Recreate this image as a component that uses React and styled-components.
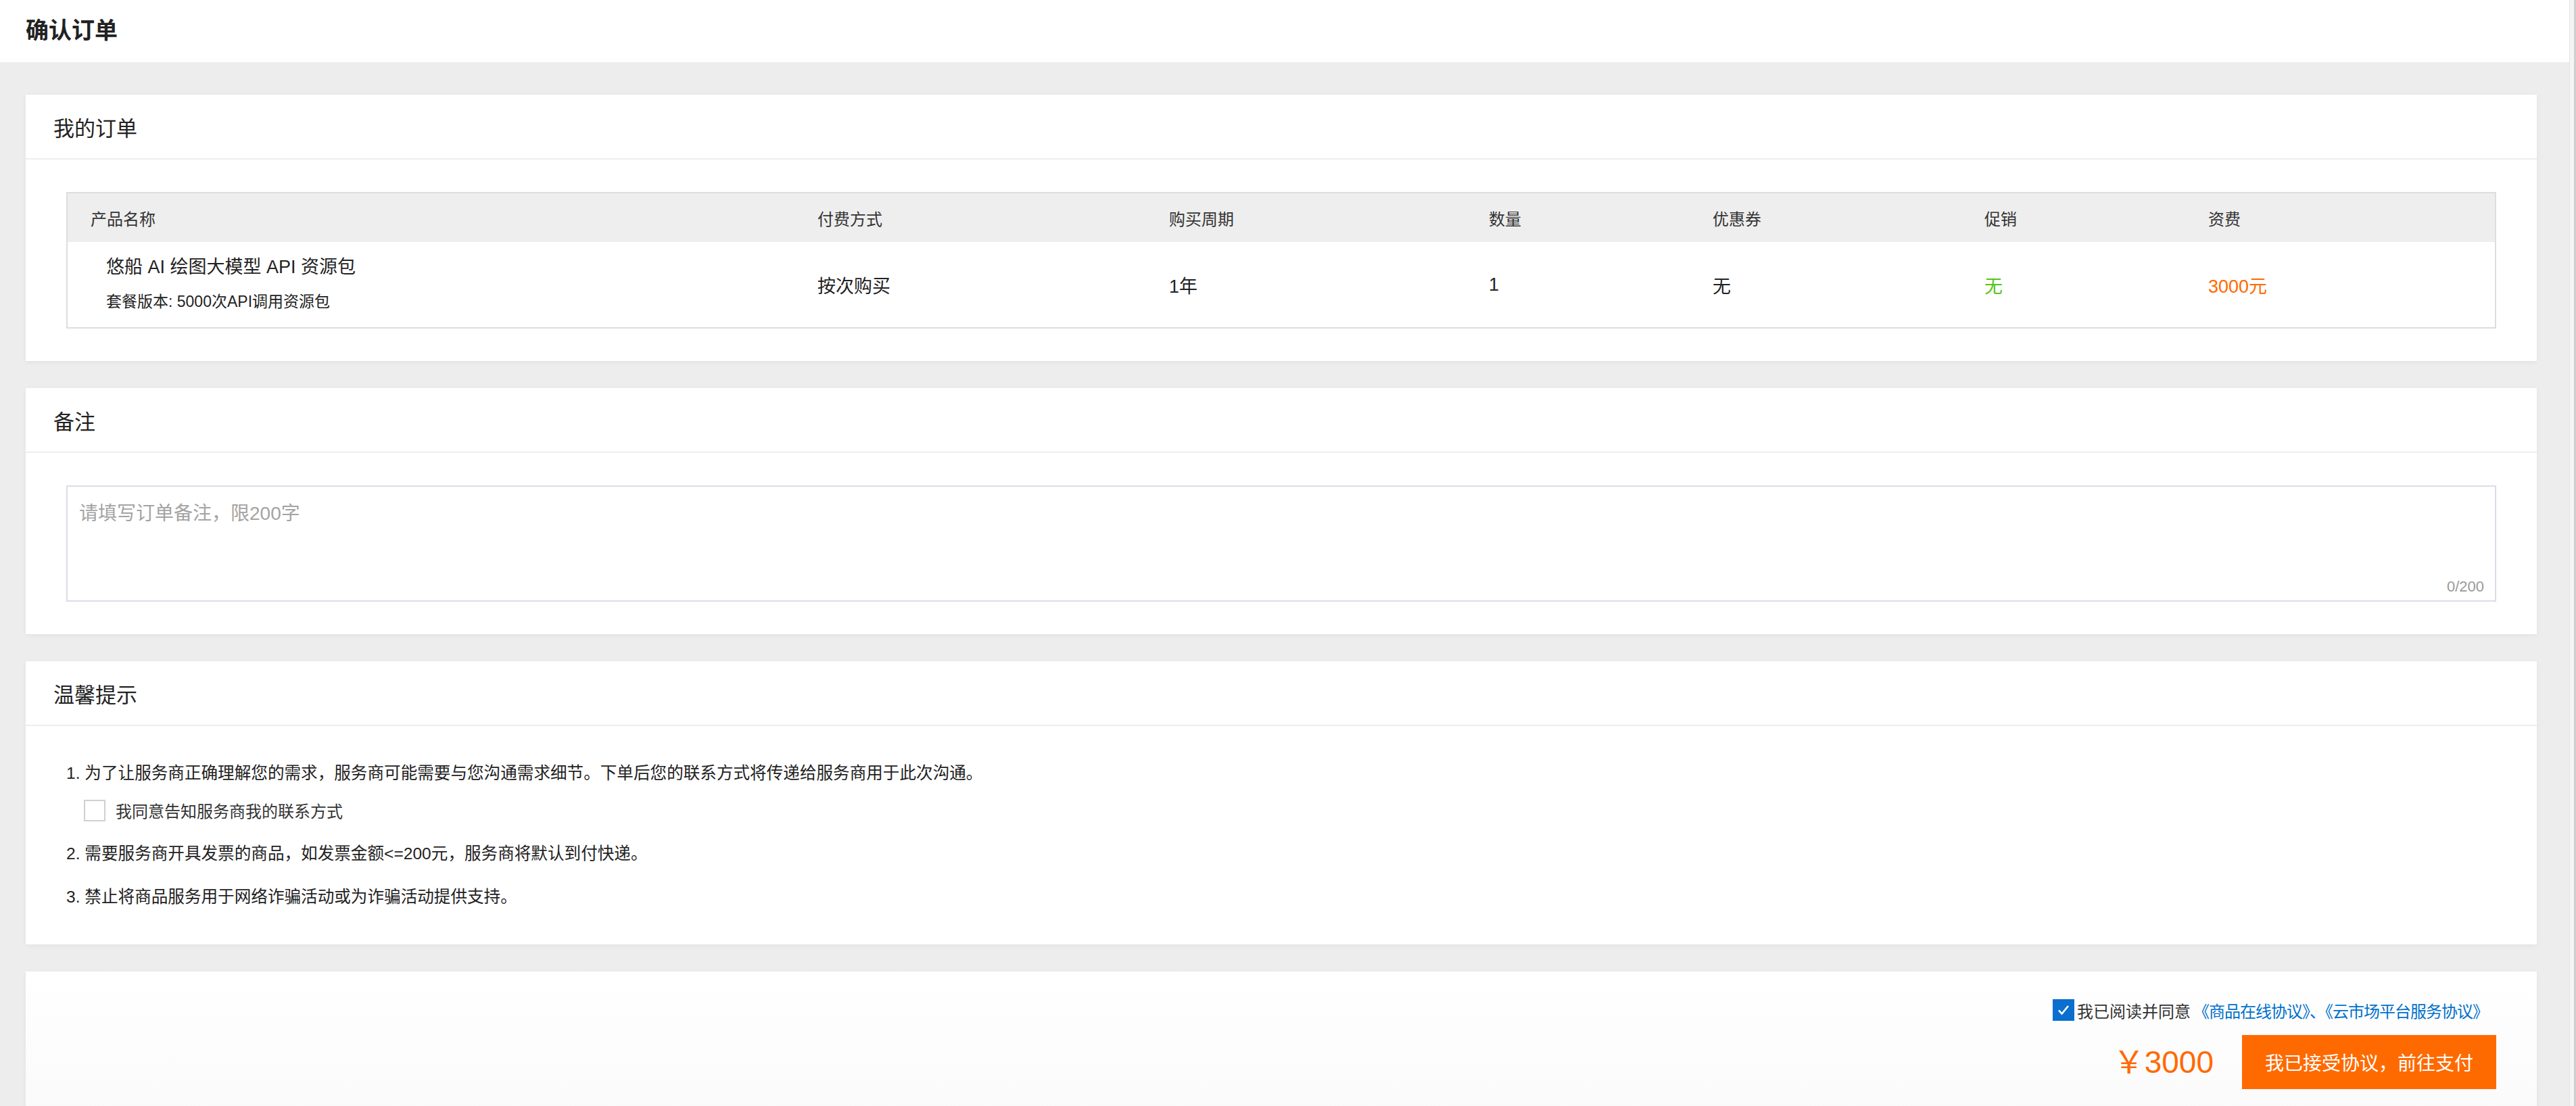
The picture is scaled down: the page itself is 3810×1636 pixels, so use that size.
import styled, { createGlobalStyle } from 'styled-components'

const GlobalStyle = createGlobalStyle`
  * { box-sizing: border-box; }
  html, body { margin: 0; padding: 0; }
  body {
    font-family: 'Liberation Sans', 'Noto Sans CJK SC', sans-serif;
    color: #333;
    background: #ededed;
  }
`

const columns = [
  { key: 'name', title: '产品名称' },
  { key: 'pay', title: '付费方式' },
  { key: 'period', title: '购买周期' },
  { key: 'count', title: '数量' },
  { key: 'coupon', title: '优惠券' },
  { key: 'promo', title: '促销' },
  { key: 'fee', title: '资费' },
]

const order = {
  name: '悠船 AI 绘图大模型 API 资源包',
  spec: '套餐版本: 5000次API调用资源包',
  pay: '按次购买',
  period: '1年',
  count: '1',
  coupon: '无',
  promo: '无',
  fee: '3000元',
}

const tips = [
  '1. 为了让服务商正确理解您的需求，服务商可能需要与您沟通需求细节。下单后您的联系方式将传递给服务商用于此次沟通。',
  '2. 需要服务商开具发票的商品，如发票金额<=200元，服务商将默认到付快递。',
  '3. 禁止将商品服务用于网络诈骗活动或为诈骗活动提供支持。',
]

const ConfirmOrder = () => {
  return (
    <Shell>
      <GlobalStyle />
      <Main>
        <TopBar>
          <PageTitle>确认订单</PageTitle>
        </TopBar>
        <Content>
          <Card>
            <CardHead>我的订单</CardHead>
            <CardBody>
              <Table>
                <HeadRow>
                  {columns.map((col) => (
                    <Cell key={col.key}>{col.title}</Cell>
                  ))}
                </HeadRow>
                <BodyRow>
                  <ProductCell>
                    <ProductName>{order.name}</ProductName>
                    <ProductSpec>{order.spec}</ProductSpec>
                  </ProductCell>
                  <Cell>{order.pay}</Cell>
                  <Cell>{order.period}</Cell>
                  <Cell>{order.count}</Cell>
                  <Cell>{order.coupon}</Cell>
                  <Cell $tone="green">{order.promo}</Cell>
                  <Cell $tone="orange">{order.fee}</Cell>
                </BodyRow>
              </Table>
            </CardBody>
          </Card>

          <Card>
            <CardHead>备注</CardHead>
            <CardBody>
              <NoteBox>
                <NoteInput placeholder="请填写订单备注，限200字" maxLength={200} />
                <Counter>0/200</Counter>
              </NoteBox>
            </CardBody>
          </Card>

          <Card>
            <CardHead>温馨提示</CardHead>
            <CardBody>
              <Tip>{tips[0]}</Tip>
              <ContactRow>
                <EmptyBox />
                我同意告知服务商我的联系方式
              </ContactRow>
              <Tip>{tips[1]}</Tip>
              <Tip $gap>{tips[2]}</Tip>
            </CardBody>
          </Card>

          <FooterCard>
            <AgreeRow>
              <CheckedBox>
                <svg width="22" height="22" viewBox="0 0 22 22">
                  <path d="M4 11.5l4.6 5L18 5" fill="none" stroke="#fff" strokeWidth="2.6" />
                </svg>
              </CheckedBox>
              我已阅读并同意
              <AgreeLink href="#">《商品在线协议》、《云市场平台服务协议》</AgreeLink>
            </AgreeRow>
            <PayRow>
              <Price>￥3000</Price>
              <PayButton>我已接受协议，前往支付</PayButton>
            </PayRow>
          </FooterCard>
        </Content>
      </Main>
      <ScrollTrack />
    </Shell>
  )
}

const Shell = styled.div`
  display: flex;
  min-height: 100vh;
`

const Main = styled.div`
  flex: 1;
  min-width: 0;
`

const TopBar = styled.div`
  height: 92px;
  background: #fff;
  display: flex;
  align-items: center;
  padding: 0 38px 8px;
`

const PageTitle = styled.h1`
  margin: 0;
  font-size: 34px;
  font-weight: 700;
  color: #222;
`

const Content = styled.div`
  display: flex;
  flex-direction: column;
  gap: 40px;
  padding: 48px 48px 0 38px;
`

const Card = styled.div`
  background: #fff;
  box-shadow: 0 2px 8px rgba(0, 0, 0, 0.05);
`

const CardHead = styled.div`
  height: 96px;
  display: flex;
  align-items: center;
  padding-left: 41px;
  border-bottom: 2px solid #eeeeee;
  font-size: 31px;
  color: #222;
`

const CardBody = styled.div`
  padding: 48px 60px;
`

const Table = styled.div`
  border: 2px solid #dddddd;
`

const Row = styled.div`
  display: grid;
  grid-template-columns: 1075px 520px 473px 331px 402px 331px 1fr;
  align-items: center;
`

const HeadRow = styled(Row)`
  height: 72px;
  background: #eeeeee;
  font-size: 24px;
  color: #333;
`

const BodyRow = styled(Row)`
  height: 126px;
  font-size: 27px;
  color: #222;
`

const toneColors = {
  green: '#52c41a',
  orange: '#ff6a00',
}

const Cell = styled.div`
  padding-left: 34px;
  color: ${(p) => toneColors[p.$tone] || 'inherit'};
`

const ProductCell = styled.div`
  display: flex;
  flex-direction: column;
  gap: 15px;
  padding: 0 0 4px 57px;
`

const ProductName = styled.div`
  font-size: 27px;
  line-height: 38px;
`

const ProductSpec = styled.div`
  font-size: 23px;
  line-height: 34px;
`

const NoteBox = styled.div`
  position: relative;
`

const NoteInput = styled.textarea`
  display: block;
  width: 100%;
  height: 172px;
  margin: 0;
  padding: 17px 17px;
  border: 2px solid #dcdce8;
  resize: none;
  outline: none;
  font-family: inherit;
  font-size: 28px;
  color: #333;

  &::placeholder {
    color: #a3a3a3;
  }
`

const Counter = styled.span`
  position: absolute;
  right: 18px;
  bottom: 9px;
  font-size: 22px;
  color: #999;
`

const Tip = styled.div`
  font-size: 24.6px;
  line-height: 44px;
  color: #222;
  margin-top: ${(p) => (p.$gap ? '20px' : '0')};
`

const ContactRow = styled.label`
  display: flex;
  align-items: center;
  gap: 15px;
  margin: 15px 0 25px 26px;
  font-size: 24px;
  color: #333;
`

const EmptyBox = styled.span`
  width: 32px;
  height: 32px;
  border: 2px solid #d0d0d0;
  background: #fff;
`

const FooterCard = styled(Card)`
  display: flex;
  flex-direction: column;
  align-items: flex-end;
  padding: 41px 60px 48px;
  background: linear-gradient(#fff, #fafafa);
`

const AgreeRow = styled.div`
  display: flex;
  align-items: center;
  gap: 4px;
  height: 32px;
  margin-right: 12px;
  font-size: 24px;
  color: #333;
`

const CheckedBox = styled.span`
  width: 32px;
  height: 32px;
  background: #0a6fcf;
  display: flex;
  align-items: center;
  justify-content: center;
`

const AgreeLink = styled.a`
  color: #0070cc;
  text-decoration: none;
  letter-spacing: -1px;
`

const PayRow = styled.div`
  display: flex;
  align-items: center;
  gap: 42px;
  margin-top: 21px;
`

const Price = styled.span`
  font-size: 46px;
  line-height: 1;
  color: #ff6a00;
`

const PayButton = styled.button`
  width: 376px;
  height: 80px;
  border: none;
  background: #ff6a00;
  color: #fff;
  font-family: inherit;
  font-size: 28px;
  cursor: pointer;
`

const ScrollTrack = styled.div`
  width: 10px;
  background: #f4f4f4;
  border-left: 1px solid #e4e4e4;
  box-shadow: inset -3px 0 0 #cfcfcf;
`

export default ConfirmOrder
